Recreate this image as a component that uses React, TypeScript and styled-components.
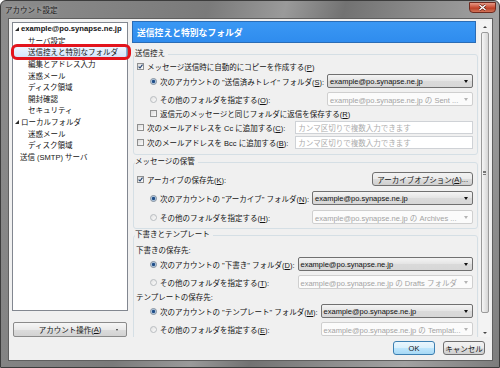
import React from "react";
import styled, { createGlobalStyle, css } from "styled-components";

const GlobalStyle = createGlobalStyle`
  html, body {
    margin: 0;
    padding: 0;
    overflow: hidden;
    background: #fff;
  }
  body {
    font-family: "Liberation Sans", "Noto Sans CJK JP", sans-serif;
    font-size: 7.5px;
    color: #141414;
  }
`;

const Window = styled.div`
  width: 500px;
  height: 368px;
  box-sizing: border-box;
  display: flex;
  flex-direction: column;
  border: 1px solid #3c3c3c;
  border-radius: 6px 6px 0 0;
  background: linear-gradient(
    105deg,
    #8c8c8c 0%,
    #7a7a7a 35%,
    #9a9a9a 48%,
    #727272 58%,
    #8e8e8e 72%,
    #a2a2a2 84%,
    #7c7c7c 100%
  );
`;

const TitleBar = styled.div`
  height: 17px;
  display: flex;
  align-items: center;
  padding-left: 4px;
`;

const Title = styled.span`
  color: #1b1b1b;
  text-shadow: 0 0 4px rgba(255, 255, 255, 0.5);
`;

const CloseButton = styled.div`
  margin-left: auto;
  margin-right: 3px;
  align-self: flex-start;
  margin-top: 1px;
  width: 27px;
  height: 11px;
  box-sizing: border-box;
  border: 1px solid #6e2a1f;
  border-radius: 0 0 4px 4px;
  background: linear-gradient(#e79a86, #c74c33 50%, #b5391f 51%, #d3745a);
  display: flex;
  align-items: center;
  justify-content: center;
`;

const Client = styled.div`
  flex: 1;
  margin: 0 6px 6px 7px;
  border: 1px solid #5f5f5f;
  background: #f0f0f0;
  display: flex;
  padding: 2px 0 0 3px;
  min-height: 0;
`;

/* left column */
const LeftColumn = styled.div`
  width: 116px;
  margin-top: 1px;
  display: flex;
  flex-direction: column;
`;

const TreeBox = styled.div`
  position: relative;
  z-index: 2;
  height: 289px;
  box-sizing: border-box;
  border: 1px solid #828790;
  background: #fff;
`;

const TreeItem = styled.div<{ $level: number; $twisty?: boolean; $selected?: boolean }>`
  position: relative;
  height: 11.6px;
  box-sizing: border-box;
  display: flex;
  align-items: center;
  gap: 1px;
  white-space: nowrap;
  padding-left: ${(p) => (p.$level === 1 ? 15 : p.$twisty ? 2 : 7)}px;
  ${(p) =>
    p.$selected &&
    css`
      border: 1px solid #84acdd;
      border-radius: 2px;
      padding-left: 14px;
      background: linear-gradient(#eef5fe, #d5e6fb);
      &::after {
        content: "";
        position: absolute;
        inset: -3px -5px -3px -3px;
        border: 3px solid #e3141c;
        border-radius: 6px;
      }
    `}
`;

const Twisty = styled.span`
  width: 0;
  height: 0;
  border-left: 4px solid transparent;
  border-bottom: 4px solid #2b2b2b;
  margin-right: 1px;
`;

const AccountName = styled.span`
  font-weight: bold;
  font-size: 7.7px;
`;

const MenuButton = styled.div`
  margin: 11px 1px 0;
  height: 15px;
  box-sizing: border-box;
  border: 1px solid #8a8a8a;
  border-radius: 2px;
  background: linear-gradient(#f6f6f6, #e9e9e9 50%, #dcdcdc 51%, #d2d2d2);
  display: flex;
  align-items: center;
  justify-content: center;
  position: relative;
`;

const MenuArrow = styled.span`
  position: absolute;
  right: 8px;
  top: 6px;
  width: 0;
  height: 0;
  border-left: 1.5px solid transparent;
  border-right: 1.5px solid transparent;
  border-top: 2px solid #333;
`;

/* right column */
const RightColumn = styled.div`
  width: 360px;
  margin-left: 4px;
  display: flex;
  flex-direction: column;
`;

const ScrollPane = styled.div`
  height: 316px;
  display: flex;
  gap: 1px;
`;

const Content = styled.div`
  width: 346px;
  overflow: hidden;
`;

const PaneHeader = styled.div`
  height: 22px;
  margin-right: 2px;
  box-sizing: border-box;
  border: 1px solid #2a6cb5;
  background: linear-gradient(#3a98f4, #2f8cee);
  color: #fff;
  font-size: 8.8px;
  font-weight: bold;
  display: flex;
  align-items: center;
  padding-left: 4px;
`;

const Group = styled.fieldset<{ $mt: number; $pt?: number; $pb: number }>`
  margin: ${(p) => p.$mt}px 0 0 1px;
  padding: ${(p) => p.$pt ?? 0}px 4px ${(p) => p.$pb}px 3px;
  border: 1px solid #d5dfe5;
  border-radius: 3px;
  min-width: 0;
`;

const Legend = styled.legend`
  line-height: 10px;
  padding: 0 3px 0 0;
  margin-left: -2px;
`;

const Line = styled.div<{ $h?: number; $indent?: boolean; $mt?: number }>`
  display: flex;
  align-items: center;
  gap: 3px;
  height: ${(p) => p.$h ?? 14}px;
  margin-top: ${(p) => p.$mt ?? 0}px;
  padding-left: ${(p) => (p.$indent ? 13 : 0)}px;
  white-space: nowrap;
`;

const SubLabel = styled.div<{ $mt?: number }>`
  height: 14px;
  margin-top: ${(p) => p.$mt ?? 0}px;
  display: flex;
  align-items: center;
  margin-left: -1px;
`;

const Pair = styled.div<{ $row: number; $gap: number; $mt?: number; $cg?: number }>`
  display: grid;
  grid-template-columns: max-content 1fr;
  grid-auto-rows: ${(p) => p.$row}px;
  row-gap: ${(p) => p.$gap}px;
  column-gap: ${(p) => p.$cg ?? 3}px;
  margin-top: ${(p) => p.$mt ?? 0}px;
`;

const Choice = styled.div<{ $indent?: boolean }>`
  display: flex;
  align-items: center;
  gap: 3px;
  white-space: nowrap;
  padding-left: ${(p) => (p.$indent ? 13 : 0)}px;
`;

const Box = styled.span`
  width: 7px;
  height: 7px;
  box-sizing: border-box;
  border: 1px solid #8e8f8f;
  background: linear-gradient(135deg, #dcdcdc, #fbfbfb);
  display: inline-flex;
  align-items: center;
  justify-content: center;
  flex: none;
`;

const RadioDot = styled.span<{ $on?: boolean }>`
  width: 7px;
  height: 7px;
  box-sizing: border-box;
  border-radius: 50%;
  border: 1px solid ${(p) => (p.$on ? "#7b8a99" : "#b8bcc0")};
  background: ${(p) =>
    p.$on
      ? "radial-gradient(circle, #1f4d86 0 1.3px, #8fb1d8 1.8px, #e9eef4 2.6px)"
      : "linear-gradient(135deg, #e2e2e2, #fbfbfb)"};
  flex: none;
`;

const Select = styled.div<{ $disabled?: boolean }>`
  box-sizing: border-box;
  height: 100%;
  min-width: 0;
  border: 1px solid ${(p) => (p.$disabled ? "#cfcfcf" : "#707070")};
  border-radius: 2px;
  background: ${(p) => (p.$disabled ? "#fbfbfb" : "linear-gradient(#f4f4f4, #e4e4e4 50%, #dadada 51%, #d7d7d7)")};
  color: ${(p) => (p.$disabled ? "#a3a3a3" : "#111")};
  display: flex;
  align-items: center;
  padding: 0 4px 0 2px;
  white-space: nowrap;
  overflow: hidden;
  &::after {
    content: "";
    margin-left: auto;
    width: 0;
    height: 0;
    border-left: 2.5px solid transparent;
    border-right: 2.5px solid transparent;
    border-top: 3px solid ${(p) => (p.$disabled ? "#b4b4b4" : "#111")};
  }
`;

const TextInput = styled.div`
  box-sizing: border-box;
  height: 100%;
  border: 1px solid #cfd2d6;
  background: #fff;
  color: #acacac;
  display: flex;
  align-items: center;
  padding: 0 2px;
  white-space: nowrap;
`;

const PushButton = styled.div<{ $default?: boolean; $w?: number }>`
  box-sizing: border-box;
  height: 14px;
  ${(p) => p.$w && `width: ${p.$w}px;`}
  padding: 0 4px;
  border: 1px solid ${(p) => (p.$default ? "#3c7fb1" : "#707070")};
  border-radius: 3px;
  background: ${(p) =>
    p.$default
      ? "linear-gradient(#eaf6fd, #d9f0fc 50%, #bee6fd 51%, #a7d9f5)"
      : "linear-gradient(#f2f2f2, #ebebeb 50%, #dddddd 51%, #cfcfcf)"};
  display: flex;
  align-items: center;
  justify-content: center;
  white-space: nowrap;
`;

const Key = styled.u`
  text-decoration: underline;
`;

const ScrollBar = styled.div`
  width: 11px;
  display: flex;
  flex-direction: column;
  align-items: center;
  background: #f3f3f3;
`;

const ScrollArrow = styled.div<{ $down?: boolean }>`
  height: ${(p) => (p.$down ? 8 : 11)}px;
  width: 100%;
  display: flex;
  align-items: center;
  justify-content: center;
  &::before {
    content: "";
    width: 0;
    height: 0;
    border-left: 2px solid transparent;
    border-right: 2px solid transparent;
    ${(p) => (p.$down ? "border-top: 2.5px solid #444;" : "border-bottom: 2.5px solid #444;")}
  }
`;

const Thumb = styled.div`
  width: 8px;
  height: 281px;
  box-sizing: border-box;
  border: 1px solid #9a9a9a;
  border-radius: 2px;
  background: linear-gradient(90deg, #f6f6f6, #e6e6e6 50%, #d5d5d5);
  display: flex;
  align-items: center;
  justify-content: center;
`;

const Grip = styled.span`
  width: 3px;
  height: 4px;
  border-top: 1px solid #777;
  border-bottom: 1px solid #777;
  box-sizing: border-box;
  position: relative;
  &::after {
    content: "";
    position: absolute;
    left: 0;
    right: 0;
    top: 0.5px;
    border-top: 1px solid #777;
  }
`;

const Spacer = styled.div`
  flex: 1;
`;

const ButtonRow = styled.div`
  display: flex;
  justify-content: flex-end;
  gap: 8px;
  padding: 4px 7px 0 0;
`;

const CheckMark = () => (
  <svg width="5" height="5" viewBox="0 0 5 5">
    <path d="M0.6 2.6 L2 4 L4.5 0.7" stroke="#1e3e6e" strokeWidth="1.1" fill="none" />
  </svg>
);

const Check = ({ on }: { on?: boolean }) => <Box>{on && <CheckMark />}</Box>;

const ACCOUNT = "example@po.synapse.ne.jp";

export default function App() {
  return (
    <>
      <GlobalStyle />
      <Window>
        <TitleBar>
          <Title>アカウント設定</Title>
          <CloseButton>
            <svg width="9" height="7" viewBox="0 0 9 7">
              <path d="M1.5 1 L7.5 6 M7.5 1 L1.5 6" stroke="#5a1a10" strokeWidth="2.6" />
              <path d="M1.5 1 L7.5 6 M7.5 1 L1.5 6" stroke="#fff" strokeWidth="1.4" />
            </svg>
          </CloseButton>
        </TitleBar>
        <Client>
          <LeftColumn>
            <TreeBox>
              <TreeItem $level={0} $twisty>
                <Twisty />
                <AccountName>{ACCOUNT}</AccountName>
              </TreeItem>
              <TreeItem $level={1}>サーバ設定</TreeItem>
              <TreeItem $level={1} $selected>
                送信控えと特別なフォルダ
              </TreeItem>
              <TreeItem $level={1}>編集とアドレス入力</TreeItem>
              <TreeItem $level={1}>迷惑メール</TreeItem>
              <TreeItem $level={1}>ディスク領域</TreeItem>
              <TreeItem $level={1}>開封確認</TreeItem>
              <TreeItem $level={1}>セキュリティ</TreeItem>
              <TreeItem $level={0} $twisty>
                <Twisty />
                ローカルフォルダ
              </TreeItem>
              <TreeItem $level={1}>迷惑メール</TreeItem>
              <TreeItem $level={1}>ディスク領域</TreeItem>
              <TreeItem $level={0}>送信 (SMTP) サーバ</TreeItem>
            </TreeBox>
            <MenuButton>
              アカウント操作(<Key>A</Key>)
              <MenuArrow />
            </MenuButton>
          </LeftColumn>

          <RightColumn>
            <ScrollPane>
              <Content>
                <PaneHeader>送信控えと特別なフォルダ</PaneHeader>

                <Group $mt={6} $pb={5}>
                  <Legend>送信控え</Legend>
                  <Line>
                    <Check on />
                    <span>
                      メッセージ送信時に自動的にコピーを作成する(<Key>P</Key>)
                    </span>
                  </Line>
                  <Pair $row={14} $gap={4} $mt={1}>
                    <Choice $indent>
                      <RadioDot $on />
                      <span>
                        次のアカウントの "送信済みトレイ" フォルダ(<Key>S</Key>):
                      </span>
                    </Choice>
                    <Select>{ACCOUNT}</Select>
                    <Choice $indent>
                      <RadioDot />
                      <span>
                        その他のフォルダを指定する(<Key>O</Key>):
                      </span>
                    </Choice>
                    <Select $disabled>{ACCOUNT} の Sent ...</Select>
                  </Pair>
                  <Line $indent>
                    <Check />
                    <span>
                      返信元のメッセージと同じフォルダに返信を保存する(<Key>R</Key>)
                    </span>
                  </Line>
                  <Pair $row={13} $gap={2} $mt={1} $cg={7}>
                    <Choice>
                      <Check />
                      <span>
                        次のメールアドレスを Cc に追加する(<Key>C</Key>):
                      </span>
                    </Choice>
                    <TextInput>カンマ区切りで複数入力できます</TextInput>
                    <Choice>
                      <Check />
                      <span>
                        次のメールアドレスを Bcc に追加する(<Key>B</Key>):
                      </span>
                    </Choice>
                    <TextInput>カンマ区切りで複数入力できます</TextInput>
                  </Pair>
                </Group>

                <Group $mt={2} $pt={4} $pb={4}>
                  <Legend>メッセージの保管</Legend>
                  <Line $h={16}>
                    <Check on />
                    <span>
                      アーカイブの保存先(<Key>K</Key>):
                    </span>
                    <Spacer />
                    <PushButton>
                      アーカイブオプション(<Key>A</Key>)...
                    </PushButton>
                  </Line>
                  <Pair $row={14} $gap={5} $mt={4}>
                    <Choice $indent>
                      <RadioDot $on />
                      <span>
                        次のアカウントの "アーカイブ" フォルダ(<Key>N</Key>):
                      </span>
                    </Choice>
                    <Select>{ACCOUNT}</Select>
                    <Choice $indent>
                      <RadioDot />
                      <span>
                        その他のフォルダを指定する(<Key>H</Key>):
                      </span>
                    </Choice>
                    <Select $disabled>{ACCOUNT} の Archives ...</Select>
                  </Pair>
                </Group>

                <Group $mt={1} $pb={4}>
                  <Legend>下書きとテンプレート</Legend>
                  <SubLabel $mt={2}>下書きの保存先:</SubLabel>
                  <Pair $row={14} $gap={4} $mt={1}>
                    <Choice $indent>
                      <RadioDot $on />
                      <span>
                        次のアカウントの "下書き" フォルダ(<Key>D</Key>):
                      </span>
                    </Choice>
                    <Select>{ACCOUNT}</Select>
                    <Choice $indent>
                      <RadioDot />
                      <span>
                        その他のフォルダを指定する(<Key>T</Key>):
                      </span>
                    </Choice>
                    <Select $disabled>{ACCOUNT} の Drafts フォルダ</Select>
                  </Pair>
                  <SubLabel>テンプレートの保存先:</SubLabel>
                  <Pair $row={14} $gap={4} $mt={1}>
                    <Choice $indent>
                      <RadioDot $on />
                      <span>
                        次のアカウントの "テンプレート" フォルダ(<Key>M</Key>):
                      </span>
                    </Choice>
                    <Select>{ACCOUNT}</Select>
                    <Choice $indent>
                      <RadioDot />
                      <span>
                        その他のフォルダを指定する(<Key>E</Key>):
                      </span>
                    </Choice>
                    <Select $disabled>{ACCOUNT} の Templat...</Select>
                  </Pair>
                </Group>
              </Content>
              <ScrollBar>
                <ScrollArrow />
                <Thumb>
                  <Grip />
                </Thumb>
                <Spacer />
                <ScrollArrow $down />
              </ScrollBar>
            </ScrollPane>
            <ButtonRow>
              <PushButton $default $w={42}>
                OK
              </PushButton>
              <PushButton $w={42}>キャンセル</PushButton>
            </ButtonRow>
          </RightColumn>
        </Client>
      </Window>
    </>
  );
}
